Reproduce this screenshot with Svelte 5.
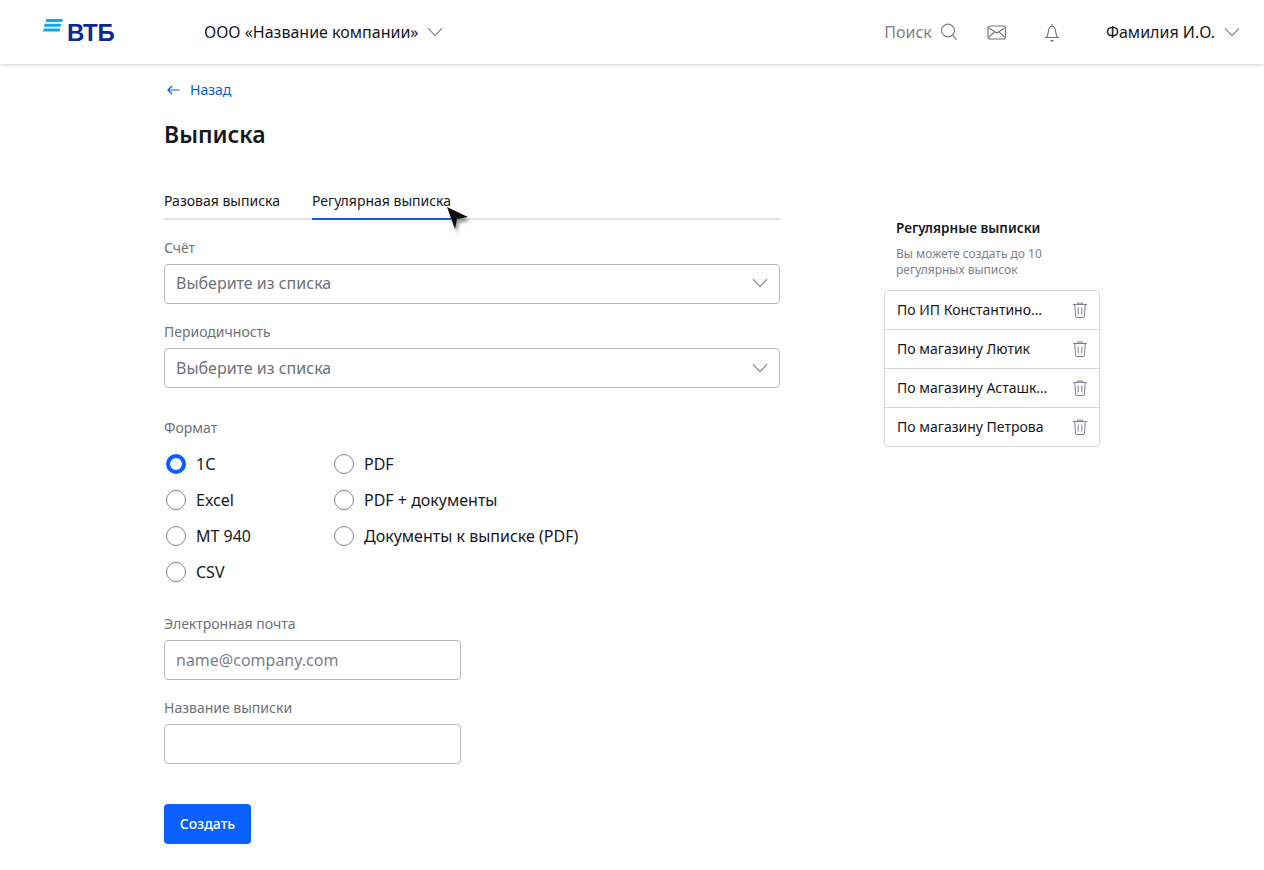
<script>
  const formatsLeft = ['1С', 'Excel', 'MT 940', 'CSV'];
  const formatsRight = ['PDF', 'PDF + документы', 'Документы к выписке (PDF)'];
  const statements = ['По ИП Константиновскому', 'По магазину Лютик', 'По магазину Асташкова', 'По магазину Петрова'];
</script>

{#snippet chevron(cls)}
  <svg class={cls} width="16" height="10" viewBox="0 0 16 10" fill="none" stroke="#7d8189" stroke-width="1.1"><path d="M1 1.2l7 7.4 7-7.4" /></svg>
{/snippet}

{#snippet radio(label, checked)}
  <div class="radio-row">
    <span class="radio" class:checked></span>
    <span>{label}</span>
  </div>
{/snippet}

<header class="topbar">
  <div class="logo">
    <svg width="20" height="13" viewBox="0 0 20 13" fill="#12a5e8">
      <path d="M3.400 0H20l-.9 3H2.500zM1.700 4.800h16.600l-.9 3H.8zM.9 9.400h16.400l-.8 3H0z" />
    </svg>
    <span class="logo-text">ВТБ</span>
  </div>
  <div class="company">
    <span>ООО «Название компании»</span>
    {@render chevron('chev')}
  </div>
  <div class="spacer"></div>
  <div class="search">
    <span>Поиск</span>
    <svg width="18" height="18" viewBox="0 0 18 18" fill="none" stroke="#7d8189" stroke-width="1.2"><circle cx="8" cy="7.500" r="6.400" /><path d="M12.600 12.200l4 4.400" /></svg>
  </div>
  <svg class="mail" width="20" height="15" viewBox="0 0 20 15" fill="none" stroke="#6e727a" stroke-width="1.1"><rect x="1" y="1" width="17.500" height="13" rx="2" /><path d="M2 3l7.700 5L17.500 3M2 12l5.500-5.200M17.500 12L12 6.800" /></svg>
  <svg class="bell" width="16" height="19" viewBox="0 0 16 19" fill="none" stroke="#6e727a" stroke-width="1.1"><path d="M8 1v2M1 14.500h14M2.400 14.500c1.600-2 1.600-3.600 1.900-6C4.600 5.600 6 3.200 8 3.200s3.400 2.400 3.700 5.300c.3 2.400.3 4 1.900 6M6.400 17l1.600 1.300L9.600 17" /></svg>
  <div class="user">
    <span>Фамилия И.О.</span>
    {@render chevron('chev')}
  </div>
</header>

<div class="page">
  <main class="form">
    <a class="back" href="#back">
      <svg width="13" height="10" viewBox="0 0 13 10" fill="none" stroke="#0a5cdc" stroke-width="1.2"><path d="M12.500 5H1M5 1L1 5l4 4" /></svg>
      Назад
    </a>
    <h1>Выписка</h1>

    <div class="tabs">
      <span class="tab">Разовая выписка</span>
      <span class="tab active">Регулярная выписка</span>
      <svg class="cursor" width="30" height="34" viewBox="0 0 30 34">
        <defs><filter id="blur" x="-30%" y="-30%" width="160%" height="160%"><feGaussianBlur stdDeviation="1.500" /></filter></defs>
        <path d="M2 2l21 10-11 2-2 10z" fill="#000" opacity=".4" filter="url(#blur)" transform="translate(1 3)" />
        <path d="M1 1l21 10-11 2-2 10z" fill="#0b0b0b" />
      </svg>
    </div>

    <label class="label" for="account">Счёт</label>
    <div class="select first" id="account">
      <span>Выберите из списка</span>
      {@render chevron('chev')}
    </div>

    <label class="label" for="period">Периодичность</label>
    <div class="select" id="period">
      <span>Выберите из списка</span>
      {@render chevron('chev')}
    </div>

    <div class="label format-label">Формат</div>
    <div class="formats">
      <div class="col">
        {#each formatsLeft as f, i}
          {@render radio(f, i === 0)}
        {/each}
      </div>
      <div class="col">
        {#each formatsRight as f}
          {@render radio(f, false)}
        {/each}
      </div>
    </div>

    <label class="label email-label" for="email">Электронная почта</label>
    <input class="input" id="email" placeholder="name@company.com" />

    <label class="label" for="name">Название выписки</label>
    <input class="input" id="name" />

    <button class="create">Создать</button>
  </main>

  <aside class="side">
    <div class="side-head">
      <h2>Регулярные выписки</h2>
      <p>Вы можете создать до 10 регулярных выписок</p>
    </div>
    <ul class="list">
      {#each statements as s}
        <li>
          <span class="item-name">{s}</span>
          <svg width="14" height="16" viewBox="0 0 14 16" fill="none" stroke="#7d8189" stroke-width="1"><path d="M0 2.500h14M4.500 2.500V1h5v1.500M1.800 2.500l.7 11.500q.1 1.500 1.500 1.500h6q1.400 0 1.500-1.500l.7-11.500M5.200 5.500v7M8.800 5.500v7" /></svg>
        </li>
      {/each}
    </ul>
  </aside>
</div>

<style>
  :global(body) {
    background: #fff;
    font-family: "Noto Sans", "Open Sans", sans-serif;
    color: #16181d;
  }

  .topbar {
    height: 64px;
    display: flex;
    align-items: center;
    padding: 0 24px 0 43px;
    box-shadow: 0 1px 3px rgba(30, 35, 45, 0.22);
    font-size: 16px;
  }
  .logo {
    width: 161px;
    display: flex;
    align-items: flex-start;
    height: 26px;
  }
  .logo-text {
    font-family: "Liberation Sans", sans-serif;
    font-weight: 700;
    font-size: 24px;
    line-height: 26px;
    color: #0a2896;
    margin: 1px 0 0 4px;
    letter-spacing: -0.3px;
  }
  .company, .user, .search {
    display: flex;
    align-items: center;
    gap: 9px;
  }
  .spacer { flex: 1; }
  .search { color: #7d8189; gap: 8px; }
  .mail { margin-left: 29px; }
  .bell { margin-left: 37px; }
  .user { margin-left: 46px; }

  .page {
    display: flex;
    padding-left: 164px;
  }
  .form {
    width: 616px;
    display: flex;
    flex-direction: column;
    align-items: flex-start;
  }
  .back {
    margin-top: 17px;
    display: flex;
    align-items: center;
    gap: 10px;
    padding-left: 3px;
    color: #0a5cdc;
    font-size: 14px;
    line-height: 18px;
    text-decoration: none;
  }
  h1 {
    margin: 19px 0 0;
    font-size: 23px;
    line-height: 32px;
    font-weight: 600;
  }
  .tabs {
    position: relative;
    margin-top: 32px;
    width: 100%;
    display: flex;
    gap: 32px;
    height: 38px;
    border-bottom: 2px solid #e3e4e6;
    box-sizing: border-box;
    font-size: 14px;
    line-height: 22px;
  }
  .tab {
    padding-top: 8px;
    height: 38px;
    box-sizing: border-box;
  }
  .tab.active { border-bottom: 2px solid #0a5cdc; }
  .cursor {
    position: absolute;
    left: 282px;
    top: 24px;
  }
  .label {
    display: block;
    color: #6e727a;
    font-size: 14px;
    line-height: 18px;
    margin-top: 19px;
    margin-bottom: 7px;
  }
  .select, .input {
    box-sizing: border-box;
    height: 40px;
    border: 1px solid #b3b6bb;
    border-radius: 4px;
    font-size: 16px;
    font-family: inherit;
    background: #fff;
    flex: none;
  }
  .select {
    width: 616px;
    display: flex;
    align-items: center;
    justify-content: space-between;
    padding: 0 11px 0 11px;
    color: #6e727a;
  }
  .select.first { padding-bottom: 2px; }
  .input {
    width: 297px;
    padding: 0 11px;
    color: #16181d;
    outline: none;
  }
  .input::placeholder { color: #7d8189; opacity: 1; }
  .format-label { margin-top: 31px; margin-bottom: 9px; }
  .formats { display: flex; }
  .col { width: 168px; display: flex; flex-direction: column; }
  .radio-row {
    height: 36px;
    display: flex;
    align-items: center;
    gap: 10px;
    font-size: 16px;
    white-space: nowrap;
  }
  .radio {
    flex: none;
    box-sizing: border-box;
    width: 20px;
    height: 20px;
    margin-left: 2px;
    border: 1px solid #7d8189;
    border-radius: 50%;
  }
  .radio.checked { border: 4.500px solid #0a5fff; }
  .email-label { margin-top: 25px; }
  .create {
    margin-top: 40px;
    height: 40px;
    width: 87px;
    border: 0;
    border-radius: 4px;
    padding: 0 0 2px;
    background: #0a5fff;
    color: #fff;
    font-family: inherit;
    font-size: 14px;
    font-weight: 500;
  }

  .side {
    margin-left: 104px;
    width: 216px;
    padding-top: 154px;
  }
  .side-head { padding-left: 12px; }
  h2 {
    margin: 0;
    font-size: 13.500px;
    line-height: 20px;
    font-weight: 600;
  }
  p {
    margin: 8px 0 12px;
    font-size: 12px;
    line-height: 16px;
    color: #7d8189;
  }
  .list {
    list-style: none;
    margin: 0;
    padding: 0;
    border: 1px solid #d5d7da;
    border-radius: 4px;
  }
  li {
    height: 39px;
    box-sizing: border-box;
    display: flex;
    align-items: center;
    justify-content: space-between;
    padding: 0 12px;
    font-size: 14px;
    border-bottom: 1px solid #d5d7da;
  }
  li:last-child { border-bottom: 0; height: 38px; }
  .item-name {
    width: 152px;
    line-height: 18px;
    overflow: hidden;
    white-space: nowrap;
    text-overflow: ellipsis;
  }
</style>
